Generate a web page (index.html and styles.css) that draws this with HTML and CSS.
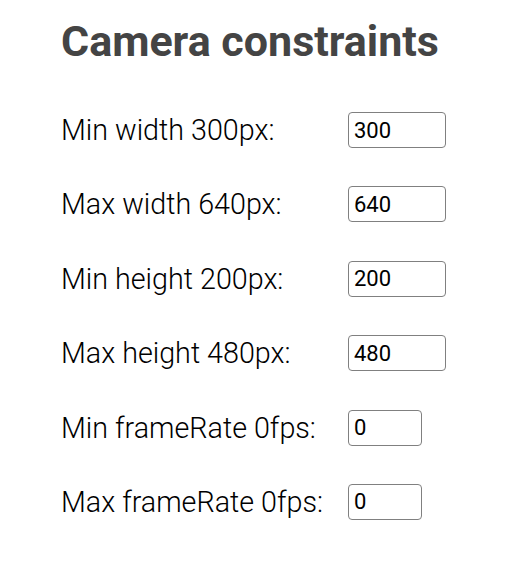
FILE: index.html
```html
<!DOCTYPE html>
<html>
<head>
<meta charset="utf-8">
<link rel="stylesheet" href="styles.css">
</head>
<body>
<div class="page">
  <h1 class="title">Camera constraints</h1>
  <div class="rows">
    <div class="row"><label class="label">Min width 300px:</label><input class="field" type="text" value="300"></div>
    <div class="row"><label class="label">Max width 640px:</label><input class="field" type="text" value="640"></div>
    <div class="row"><label class="label">Min height 200px:</label><input class="field" type="text" value="200"></div>
    <div class="row"><label class="label">Max height 480px:</label><input class="field" type="text" value="480"></div>
    <div class="row"><label class="label">Min frameRate 0fps:</label><input class="field small" type="text" value="0"></div>
    <div class="row"><label class="label">Max frameRate 0fps:</label><input class="field small" type="text" value="0"></div>
  </div>
</div>
</body>
</html>
```
FILE: styles.css
```css
html, body {
  margin: 0;
  padding: 0;
  background: #fff;
}
.page {
  padding: 12px 0 0 61px;
  font-family: Roboto, "Liberation Sans", sans-serif;
}
.title {
  margin: 0;
  font-size: 43px;
  font-weight: 700;
  color: #444;
  line-height: 58px;
}
.rows {
  display: flex;
  flex-direction: column;
  gap: 38.4px;
  margin-top: 42px;
}
.row {
  display: grid;
  grid-template-columns: 287px auto;
  align-items: center;
  height: 36px;
}
.label {
  font-size: 28.7px;
  font-weight: 300;
  color: #000;
  white-space: nowrap;
}
.field {
  box-sizing: border-box;
  width: 98px;
  height: 36px;
  border: 1px solid #808080;
  border-radius: 4px;
  padding: 0 5px;
  font-family: Roboto, "Liberation Sans", sans-serif;
  font-size: 22px;
  font-weight: 400;
  color: #000;
  background: #fff;
}
.field.small {
  width: 74px;
}
```
